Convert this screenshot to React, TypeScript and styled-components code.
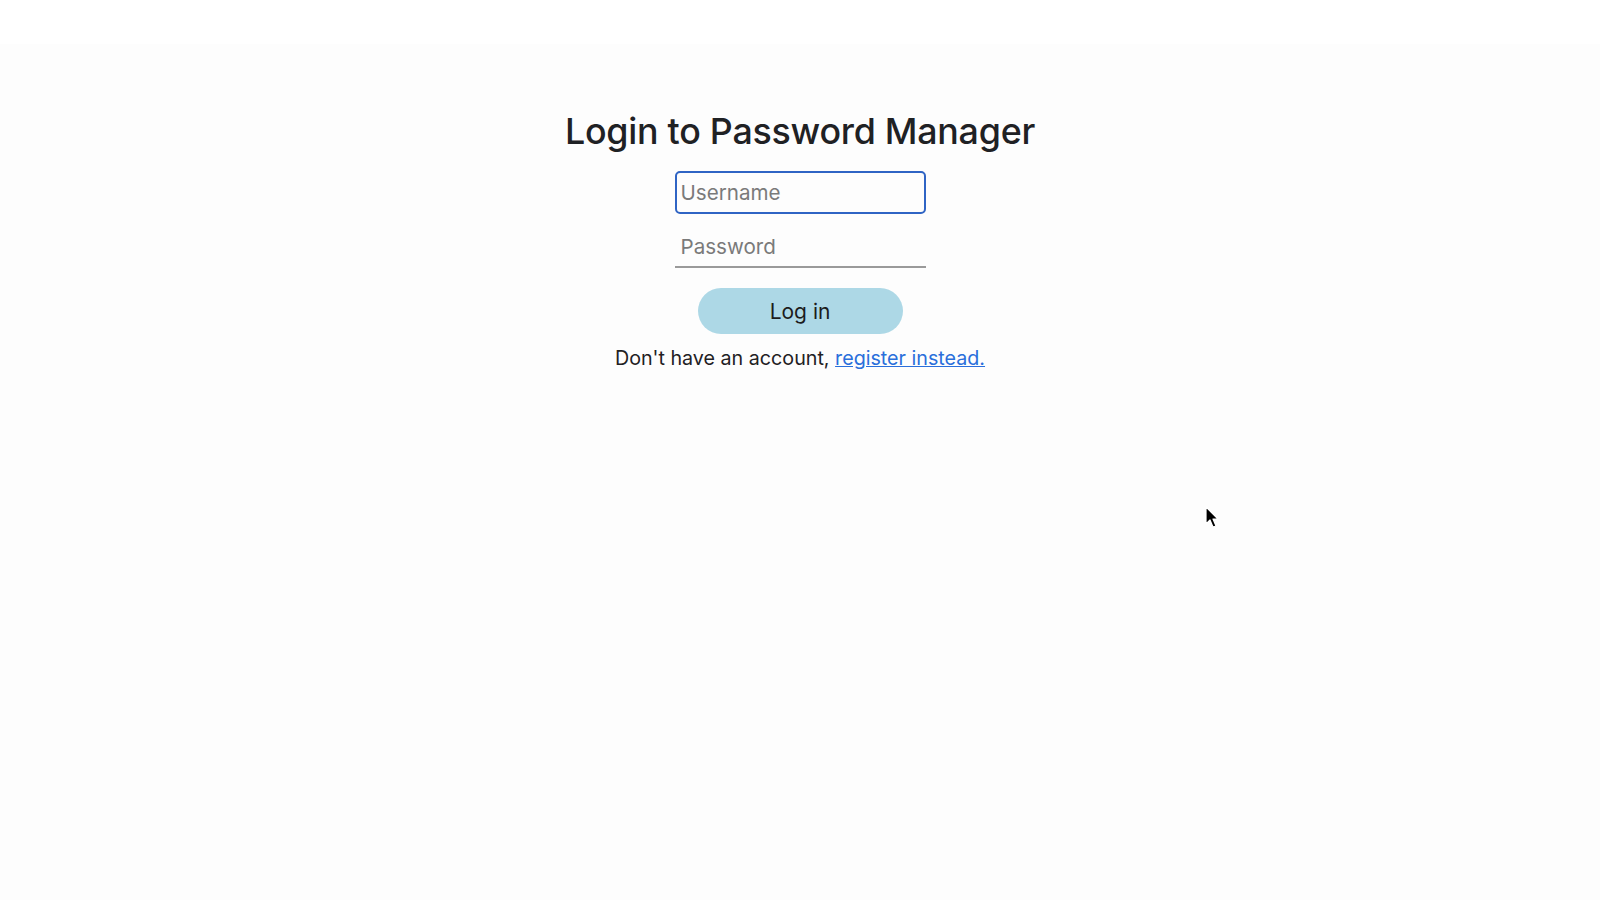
import React from "react";
import styled, { createGlobalStyle } from "styled-components";

const Global = createGlobalStyle`
  html, body {
    margin: 0;
    padding: 0;
    background: #fefefe;
    font-family: Inter, "Noto Sans", Arial, sans-serif;
  }
`;

const Page = styled.main`
  position: relative;
  min-height: 900px;
  background: linear-gradient(#ffffff 0, #ffffff 44px, #fdfdfd 44px);
  display: flex;
  flex-direction: column;
  align-items: center;
  padding-top: 110px;
  box-sizing: border-box;
`;

const Title = styled.h1`
  margin: 0;
  font-size: 35.8px;
  font-weight: 500;
  line-height: 42px;
  color: #1f2124;
  letter-spacing: -0.25px;
`;

const Form = styled.form`
  display: flex;
  flex-direction: column;
  align-items: center;
  margin-top: 19px;
`;

const TextInput = styled.input<{ $variant: "boxed" | "line" }>`
  box-sizing: border-box;
  width: 251px;
  height: ${(p) => (p.$variant === "boxed" ? "43px" : "42px")};
  font-family: inherit;
  font-size: 20.6px;
  color: #222;
  padding: 0 0 0 ${(p) => (p.$variant === "boxed" ? "4px" : "6px")};
  outline: none;
  background: transparent;
  border: ${(p) => (p.$variant === "boxed" ? "2px solid #2f64c4" : "none")};
  border-bottom: 2px solid ${(p) => (p.$variant === "boxed" ? "#2f64c4" : "#9a9a9a")};
  border-radius: ${(p) => (p.$variant === "boxed" ? "5px" : "0")};
  margin-top: ${(p) => (p.$variant === "boxed" ? "0" : "12px")};
  &::placeholder {
    color: #7a7a7a;
  }
`;

const Button = styled.button`
  margin-top: 20px;
  width: 205px;
  height: 46px;
  border: none;
  border-radius: 23px;
  background: #add8e6;
  font-family: inherit;
  font-size: 21px;
  color: #1c1c1c;
  cursor: pointer;
`;

const Footer = styled.p`
  margin: 12px 0 0;
  font-size: 19.7px;
  line-height: 24px;
  color: #1f2124;
`;

const Link = styled.a`
  color: #2a6fdb;
  text-decoration: underline;
`;

const Cursor = styled.svg`
  position: absolute;
  left: 1205px;
  top: 506px;
`;

export default function App() {
  return (
    <>
      <Global />
      <Page>
        <Title>Login to Password Manager</Title>
        <Form onSubmit={(e) => e.preventDefault()}>
          <TextInput $variant="boxed" placeholder="Username" />
          <TextInput $variant="line" type="password" placeholder="Password" />
          <Button type="submit">Log in</Button>
        </Form>
        <Footer>
          Don't have an account, <Link href="#">register instead.</Link>
        </Footer>
        <Cursor width="16" height="24" viewBox="0 0 16 24">
          <path
            d="M1 1 L1 18 L5 14 L8 21 L11 20 L8 13 L13 13 Z"
            fill="#000"
            stroke="#fff"
            strokeWidth="1.2"
            strokeLinejoin="round"
          />
        </Cursor>
      </Page>
    </>
  );
}
